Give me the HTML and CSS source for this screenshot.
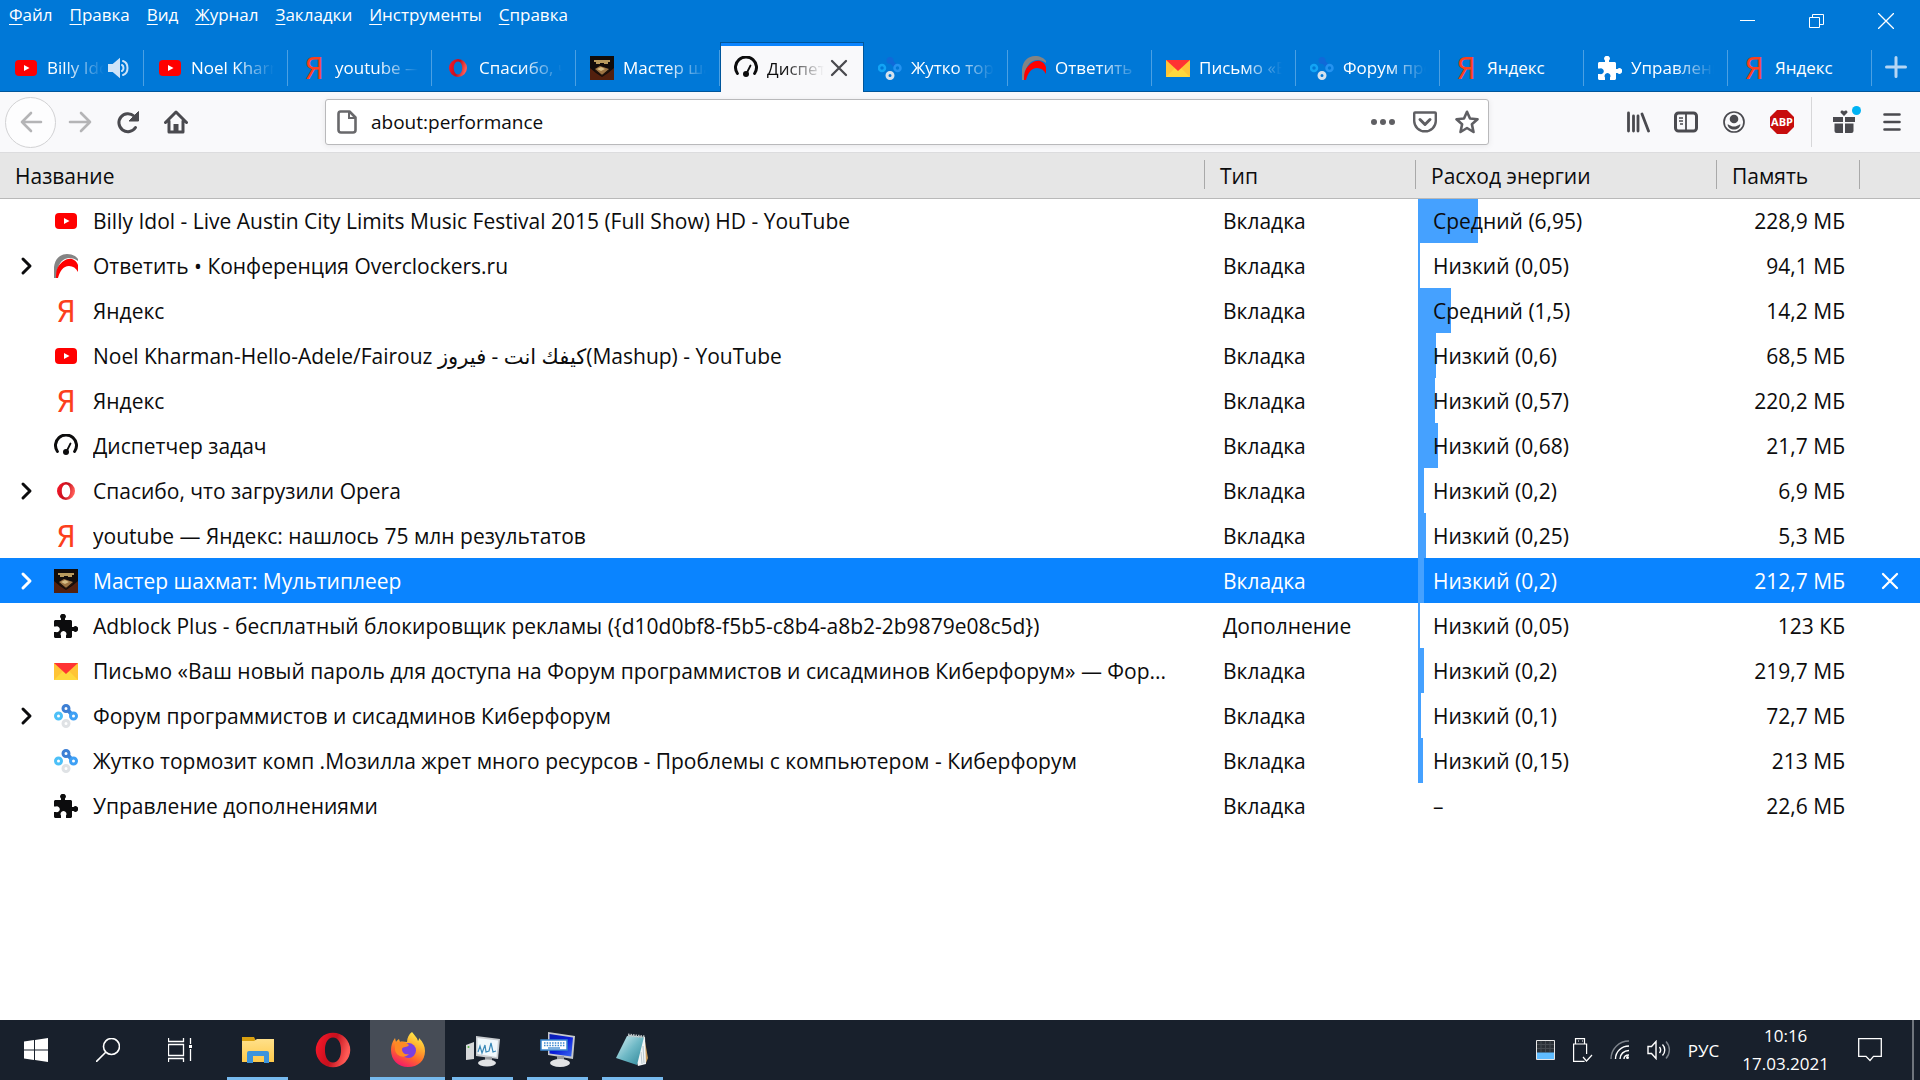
FILE: index.html
```html
<!DOCTYPE html>
<html lang="ru">
<head>
<meta charset="UTF-8">
<meta name="viewport" content="width=device-width, initial-scale=1.0">
<title>Диспетчер задач</title>
<link rel="stylesheet" href="styles.css">
</head>
<body>

<!-- icon sprite -->
<svg class="sprite" width="0" height="0">
    <defs>
        <linearGradient id="gOpera" x1="0" y1="0" x2="1" y2="0.3">
            <stop offset="0" stop-color="#ff1b2d"/>
            <stop offset="0.45" stop-color="#d0101f"/>
            <stop offset="0.6" stop-color="#c4121f"/>
            <stop offset="1" stop-color="#ff5a55"/>
        </linearGradient>
        <linearGradient id="gFox" x1="0.8" y1="0" x2="0.3" y2="1">
            <stop offset="0" stop-color="#fff44f"/>
            <stop offset="0.35" stop-color="#ffb02e"/>
            <stop offset="0.65" stop-color="#ff6a2a"/>
            <stop offset="1" stop-color="#f5156c"/>
        </linearGradient>
        <linearGradient id="gNote" x1="0" y1="0" x2="1" y2="1">
            <stop offset="0" stop-color="#d8f0f4"/>
            <stop offset="0.5" stop-color="#6fb9c6"/>
            <stop offset="1" stop-color="#2e8698"/>
        </linearGradient>
        <linearGradient id="gFolder" x1="0" y1="0" x2="0" y2="1">
            <stop offset="0" stop-color="#ffe08a"/>
            <stop offset="1" stop-color="#ffca4a"/>
        </linearGradient>
        <linearGradient id="gScreen" x1="0" y1="0" x2="1" y2="1">
            <stop offset="0" stop-color="#0a1fb0"/>
            <stop offset="0.5" stop-color="#0a1cd8"/>
            <stop offset="1" stop-color="#3c6cf0"/>
        </linearGradient>
    </defs>
    <symbol id="youtube" viewBox="0 0 24 24">
        <rect x="1" y="4" width="22" height="16" rx="4" fill="#f00"/>
        <path d="M10 9l5.500 3-5.500 3z" fill="#fff"/>
    </symbol>
    <symbol id="overclockers" viewBox="0 0 24 24">
        <path d="M0 24V13C1 5 6 0 13 0c5 0 9 2 11 5v2C20 4 15 3 11 5 6 7 3 13 2 24z" fill="#848484"/>
        <path d="M2 24c0-4 0-8 2-11C8 7 13 4 18 5c3 1 5 3 6 6v7c-2-4-5-6-9-6-6 0-9 5-11 12z" fill="#f00"/>
    </symbol>
    <symbol id="yandex" viewBox="0 0 24 24">
        <text x="12" y="23" text-anchor="middle" class="ya">Я</text>
    </symbol>
    <symbol id="gauge" viewBox="0 0 24 24">
        <path d="M3.400 17.500A10.500 10.500 0 1 1 20.600 17.500" fill="none" stroke="currentColor" stroke-width="3" stroke-linecap="round"/>
        <path d="M16.500 9.500l-4 8" stroke="currentColor" stroke-width="1.800" stroke-linecap="round"/>
        <circle cx="12" cy="18" r="3" fill="currentColor"/>
    </symbol>
    <symbol id="opera" viewBox="0 0 24 24">
        <path fill-rule="evenodd" fill="url(#gOpera)" d="M12 3a9 9 0 1 0 0 18a9 9 0 1 0 0-18zM12 5.500c2.800 0 4.200 3 4.200 6.500s-1.400 6.500-4.200 6.500S7.800 15.500 7.800 12s1.400-6.500 4.200-6.500z"/>
    </symbol>
    <symbol id="chess" viewBox="0 0 24 24">
        <rect width="24" height="24" fill="#120c0a"/>
        <path d="M0 12l6 5 6 4 6-4 6-5v12H0z" fill="#52200e"/>
        <path d="M4 4h16v2h-2v2h-4V7h-4v1H6V6H4z" fill="#b89a5e"/>
        <path d="M5 13l5-3 9 3-7 6z" fill="#9c7443"/>
        <path d="M7 13l4-2 4 2-4 2z" fill="#d6bd85"/>
        <path d="M5 14l7 5 7-5v1l-7 5-7-5z" fill="#2a1509"/>
    </symbol>
    <symbol id="puzzle" viewBox="0 0 24 24">
        <path fill="currentColor" d="M0 7.500C0 6.700.7 6 1.500 6H7V4.500A2.800 2.800 0 1 1 11 4.500V6h5.500c.8 0 1.500.7 1.500 1.500V13h1.500a2.800 2.800 0 1 1 0 4H18v5.500c0 .8-.7 1.500-1.500 1.500H12v-2.500a2.900 2.900 0 1 0-5 0V24H1.500C.7 24 0 23.300 0 22.500V18h2a2.900 2.900 0 1 0 0-5.500H0z"/>
    </symbol>
    <symbol id="mail" viewBox="0 0 24 24">
        <path d="M0 4h24v17H0z" fill="#ffd83d"/>
        <path d="M0 4v17l9-9zM24 4v17l-9-9z" fill="#ffc436"/>
        <path d="M0 4h24L12 15z" fill="#ff3333"/>
    </symbol>
    <symbol id="cyber" viewBox="0 0 24 24">
        <path d="M13 5l6 7" stroke="#3b87dc" stroke-width="4"/>
        <circle cx="12" cy="19.500" r="3" fill="none" stroke="#dfe2e5" stroke-width="3"/>
        <circle cx="4.500" cy="12" r="3" fill="none" stroke="#4cc0f8" stroke-width="3"/>
        <circle cx="19.500" cy="12" r="3" fill="#fff" stroke="#3ea0f5" stroke-width="3"/>
        <circle cx="12" cy="4.500" r="3" fill="#fff" stroke="#3d7fd4" stroke-width="3"/>
    </symbol>
    <symbol id="cyber-tab" viewBox="0 0 24 24">
        <path d="M12 4l6 7" stroke="#1069d8" stroke-width="4"/>
        <circle cx="12" cy="4.500" r="3.500" fill="#1069d8"/>
        <circle cx="4" cy="12" r="3" fill="none" stroke="#12a4f5" stroke-width="2.500"/>
        <circle cx="19.500" cy="12" r="3" fill="none" stroke="#2593f0" stroke-width="2.500"/>
        <circle cx="12" cy="19.500" r="3" fill="none" stroke="#d5e2ee" stroke-width="3"/>
    </symbol>
    <symbol id="chevron" viewBox="0 0 16 20">
        <path d="M3 3l7 7-7 7" fill="none" stroke="currentColor" stroke-width="3" stroke-linecap="round" stroke-linejoin="round"/>
    </symbol>
    <symbol id="cross" viewBox="0 0 24 24">
        <path d="M5 5l14 14M19 5L5 19" stroke="currentColor" stroke-width="2.300" stroke-linecap="round"/>
    </symbol>
</svg>

<header class="titlebar">
    <nav class="menubar">
        <button><u>Ф</u>айл</button>
        <button><u>П</u>равка</button>
        <button><u>В</u>ид</button>
        <button><u>Ж</u>урнал</button>
        <button><u>З</u>акладки</button>
        <button><u>И</u>нструменты</button>
        <button><u>С</u>правка</button>
    </nav>
    <div class="window-controls">
        <button aria-label="Свернуть"><svg width="16" height="16" viewBox="0 0 16 16"><path d="M0 7.500h15" stroke="#fff"/></svg></button>
        <button aria-label="Восстановить"><svg width="16" height="16" viewBox="0 0 16 16"><path d="M.5 4.500h10v10H.5zM3.500 4.500v-3h11v10h-4" fill="none" stroke="#fff"/></svg></button>
        <button aria-label="Закрыть"><svg width="16" height="16" viewBox="0 0 16 16"><path d="M0 0l16 16M16 0L0 16" stroke="#fff" stroke-width="1.300"/></svg></button>
    </div>
</header>

<div class="tabs">
    <div class="tab">
        <button class="tab-main"><svg class="icon"><use href="#youtube"/></svg><span class="fade">Billy Idol - Live Austin</span></button>
        <button class="tab-extra" aria-label="Звук">
            <svg width="24" height="24" viewBox="0 0 24 24" fill="none" stroke="#cfe4f8" stroke-width="2"><path d="M2 9h4l6-5v16l-6-5H2z" fill="#cfe4f8"/><path d="M15 9c2 1 2 5 0 6M16 5c6 2 6 12 0 14" stroke-linecap="round"/></svg>
        </button>
    </div>
    <div class="tab"><button class="tab-main"><svg class="icon"><use href="#youtube"/></svg><span class="fade">Noel Kharman-Hello</span></button></div>
    <div class="tab"><button class="tab-main"><svg class="icon"><use href="#yandex"/></svg><span class="fade">youtube — Яндекс</span></button></div>
    <div class="tab"><button class="tab-main"><svg class="icon"><use href="#opera"/></svg><span class="fade">Спасибо, что загрузили</span></button></div>
    <div class="tab"><button class="tab-main"><svg class="icon"><use href="#chess"/></svg><span class="fade">Мастер шахмат</span></button></div>
    <div class="tab active">
        <button class="tab-main"><svg class="icon"><use href="#gauge"/></svg><span class="fade">Диспетчер задач</span></button>
        <button class="tab-extra" aria-label="Закрыть вкладку"><svg class="icon"><use href="#cross"/></svg></button>
    </div>
    <div class="tab"><button class="tab-main"><svg class="icon"><use href="#cyber-tab"/></svg><span class="fade">Жутко тормозит комп</span></button></div>
    <div class="tab"><button class="tab-main"><svg class="icon"><use href="#overclockers"/></svg><span class="fade">Ответить • Конференция</span></button></div>
    <div class="tab"><button class="tab-main"><svg class="icon"><use href="#mail"/></svg><span class="fade">Письмо «Ваш новый</span></button></div>
    <div class="tab"><button class="tab-main"><svg class="icon"><use href="#cyber-tab"/></svg><span class="fade">Форум программистов</span></button></div>
    <div class="tab"><button class="tab-main"><svg class="icon"><use href="#yandex"/></svg><span>Яндекс</span></button></div>
    <div class="tab"><button class="tab-main"><svg class="icon"><use href="#puzzle"/></svg><span class="fade">Управление дополнениями</span></button></div>
    <div class="tab"><button class="tab-main"><svg class="icon"><use href="#yandex"/></svg><span>Яндекс</span></button></div>
    <button class="new-tab" aria-label="Новая вкладка"><svg class="icon" viewBox="0 0 24 24"><path d="M12 2.500v19M2.500 12h19" stroke="#b5d6f4" stroke-width="3" stroke-linecap="round"/></svg></button>
</div>

<div class="toolbar">
    <button class="back" aria-label="Назад"><svg class="icon" viewBox="0 0 24 24"><path d="M22 12H3M12 3l-9 9 9 9" fill="none" stroke="#b4b4b6" stroke-width="2.600" stroke-linecap="round" stroke-linejoin="round"/></svg></button>
    <button class="tool" aria-label="Вперёд"><svg class="icon" viewBox="0 0 24 24"><path d="M2 12h20M13 3l9 9-9 9" fill="none" stroke="#b4b4b6" stroke-width="2.600" stroke-linecap="round" stroke-linejoin="round"/></svg></button>
    <button class="tool" aria-label="Обновить"><svg class="icon" viewBox="0 0 24 24"><path d="M19.500 17.500A9 9 0 1 1 18 6" fill="none" stroke="#4a4a4f" stroke-width="3" stroke-linecap="round"/><path d="M22.500 1.500v9.500h-9.500z" fill="#4a4a4f" stroke="#4a4a4f" stroke-linejoin="round"/></svg></button>
    <button class="tool" aria-label="Домой"><svg class="icon" viewBox="0 0 24 24"><path d="M1.500 12.500L12 2l10.500 10.500M5 11v11h14V11" fill="none" stroke="#4a4a4f" stroke-width="3" stroke-linecap="round" stroke-linejoin="round"/><path d="M9.500 22v-8h5v8z" fill="#4a4a4f"/></svg></button>
    <div class="spacer"></div>
    <div class="urlbar">
        <svg class="icon" viewBox="0 0 24 24"><path d="M5.500 1.500h9l6 6V20q0 2.500-2.500 2.500H6Q3.500 22.500 3.500 20V4Q3.500 1.500 5.500 1.500z" fill="none" stroke="#68686b" stroke-width="2.600" stroke-linejoin="round"/><path d="M14 2v6h6" fill="none" stroke="#68686b" stroke-width="2"/></svg>
        <input type="text" value="about:performance" aria-label="Адрес">
        <button class="page-action" aria-label="Действия"><svg class="icon" viewBox="0 0 24 24" fill="#5f5f63"><circle cx="3" cy="12" r="3"/><circle cx="12" cy="12" r="3"/><circle cx="21" cy="12" r="3"/></svg></button>
        <button class="page-action" aria-label="Pocket"><svg class="icon" viewBox="0 0 24 24" fill="none" stroke="#5f5f63" stroke-linecap="round" stroke-linejoin="round"><path d="M2 2.500h20q.8 0 .8.8V11A10.800 10.300 0 0 1 1.200 11V3.300q0-.8.8-.8z" stroke-width="2.400"/><path d="M7 9.500l5 5 5-5" stroke-width="3"/></svg></button>
        <button class="page-action" aria-label="Закладка"><svg class="icon" viewBox="0 0 24 24"><path d="M12 1.800l3 6.700 7.500.8-5.600 5 1.600 7.700L12 18l-6.500 4 1.600-7.700-5.600-5 7.500-.8z" fill="none" stroke="#5f5f63" stroke-width="2.600" stroke-linejoin="round"/></svg></button>
    </div>
    <div class="spacer"></div>
    <button class="tool" aria-label="Библиотека"><svg class="icon" viewBox="0 0 24 24"><path d="M2.500 3v18M7.500 6v15M12 6v15M16 4l6.500 17" stroke="#4a4a4f" stroke-width="2.800" stroke-linecap="round"/></svg></button>
    <button class="tool" aria-label="Боковая панель"><svg class="icon" viewBox="0 0 24 24" fill="none" stroke="#4a4a4f"><rect x="1.500" y="3" width="21" height="18" rx="3" stroke-width="3"/><path d="M12 3v18" stroke-width="1.800"/><path d="M5 8h4M5 11h4M6 14h3" stroke-width="1.500"/></svg></button>
    <button class="tool" aria-label="Аккаунт"><svg class="icon" viewBox="0 0 24 24"><circle cx="12" cy="12" r="10" fill="none" stroke="#4a4a4f" stroke-width="1.700"/><circle cx="12" cy="9" r="4.300" fill="#4a4a4f"/><path d="M5.500 14.500c2 0 3 2 6.500 2s4.500-2 6.500-2c-.5 3-3 5-6.500 5s-6-2-6.500-5z" fill="#4a4a4f"/></svg></button>
    <button class="tool" aria-label="Adblock Plus"><svg class="icon" viewBox="0 0 24 24"><path d="M7 0h10l7 7v10l-7 7H7l-7-7V7z" fill="#c70d0d"/><text x="12" y="16" text-anchor="middle" class="abp">ABP</text></svg></button>
    <div class="divider"></div>
    <button class="tool gift" aria-label="Что нового"><svg class="icon" viewBox="0 0 24 24" fill="#4a4a4f"><path d="M1 7h10v5H1zM13 7h10v5H13zM2.500 13.500H11V23H4.500q-2 0-2-2zM13 13.500h8.500V21q0 2-2 2H13z"/><path d="M12 6L8.500 2.500C8.500 0 11 0 12 1.500 13 0 15.500 0 15.500 2.500z"/></svg></button>
    <button class="tool" aria-label="Меню"><svg class="icon" viewBox="0 0 24 24"><path d="M4.500 4.500h15M4.500 12h15M4.500 19.500h15" stroke="#4a4a4f" stroke-width="2.600" stroke-linecap="round"/></svg></button>
</div>

<main>
<table class="tasks">
    <thead>
        <tr>
            <th>Название</th>
            <th class="col-type">Тип</th>
            <th class="col-energy">Расход энергии</th>
            <th class="col-memory">Память</th>
            <th class="col-close"></th>
        </tr>
    </thead>
    <tbody>
        <tr>
            <td><div class="name"><span class="twisty"></span><svg class="icon"><use href="#youtube"/></svg><span>Billy Idol - Live Austin City Limits Music Festival 2015 (Full Show) HD - YouTube</span></div></td>
            <td class="type">Вкладка</td><td class="energy" style="background-size: 60px 100%">Средний (6,95)</td><td class="memory">228,9 МБ</td><td></td>
        </tr>
        <tr>
            <td><div class="name"><button class="twisty" aria-label="Развернуть"><svg><use href="#chevron"/></svg></button><svg class="icon"><use href="#overclockers"/></svg><span>Ответить • Конференция Overclockers.ru</span></div></td>
            <td class="type">Вкладка</td><td class="energy" style="background-size: 2px 100%">Низкий (0,05)</td><td class="memory">94,1 МБ</td><td></td>
        </tr>
        <tr>
            <td><div class="name"><span class="twisty"></span><svg class="icon"><use href="#yandex"/></svg><span>Яндекс</span></div></td>
            <td class="type">Вкладка</td><td class="energy" style="background-size: 33px 100%">Средний (1,5)</td><td class="memory">14,2 МБ</td><td></td>
        </tr>
        <tr>
            <td><div class="name"><span class="twisty"></span><svg class="icon"><use href="#youtube"/></svg><span>Noel Kharman-Hello-Adele/Fairouz كيفك انت - فيروز(Mashup) - YouTube</span></div></td>
            <td class="type">Вкладка</td><td class="energy" style="background-size: 18px 100%">Низкий (0,6)</td><td class="memory">68,5 МБ</td><td></td>
        </tr>
        <tr>
            <td><div class="name"><span class="twisty"></span><svg class="icon"><use href="#yandex"/></svg><span>Яндекс</span></div></td>
            <td class="type">Вкладка</td><td class="energy" style="background-size: 17px 100%">Низкий (0,57)</td><td class="memory">220,2 МБ</td><td></td>
        </tr>
        <tr>
            <td><div class="name"><span class="twisty"></span><svg class="icon"><use href="#gauge"/></svg><span>Диспетчер задач</span></div></td>
            <td class="type">Вкладка</td><td class="energy" style="background-size: 20px 100%">Низкий (0,68)</td><td class="memory">21,7 МБ</td><td></td>
        </tr>
        <tr>
            <td><div class="name"><button class="twisty" aria-label="Развернуть"><svg><use href="#chevron"/></svg></button><svg class="icon"><use href="#opera"/></svg><span>Спасибо, что загрузили Opera</span></div></td>
            <td class="type">Вкладка</td><td class="energy" style="background-size: 6px 100%">Низкий (0,2)</td><td class="memory">6,9 МБ</td><td></td>
        </tr>
        <tr>
            <td><div class="name"><span class="twisty"></span><svg class="icon"><use href="#yandex"/></svg><span>youtube — Яндекс: нашлось 75 млн результатов</span></div></td>
            <td class="type">Вкладка</td><td class="energy" style="background-size: 8px 100%">Низкий (0,25)</td><td class="memory">5,3 МБ</td><td></td>
        </tr>
        <tr class="selected">
            <td><div class="name"><button class="twisty" aria-label="Развернуть"><svg><use href="#chevron"/></svg></button><svg class="icon"><use href="#chess"/></svg><span>Мастер шахмат: Мультиплеер</span></div></td>
            <td class="type">Вкладка</td><td class="energy" style="background-size: 6px 100%">Низкий (0,2)</td><td class="memory">212,7 МБ</td>
            <td><button class="close" aria-label="Закрыть вкладку"><svg class="icon"><use href="#cross"/></svg></button></td>
        </tr>
        <tr>
            <td><div class="name"><span class="twisty"></span><svg class="icon"><use href="#puzzle"/></svg><span>Adblock Plus - бесплатный блокировщик рекламы ({d10d0bf8-f5b5-c8b4-a8b2-2b9879e08c5d})</span></div></td>
            <td class="type">Дополнение</td><td class="energy" style="background-size: 2px 100%">Низкий (0,05)</td><td class="memory">123 КБ</td><td></td>
        </tr>
        <tr>
            <td><div class="name"><span class="twisty"></span><svg class="icon"><use href="#mail"/></svg><span>Письмо «Ваш новый пароль для доступа на Форум программистов и сисадминов Киберфорум» — Фор...</span></div></td>
            <td class="type">Вкладка</td><td class="energy" style="background-size: 6px 100%">Низкий (0,2)</td><td class="memory">219,7 МБ</td><td></td>
        </tr>
        <tr>
            <td><div class="name"><button class="twisty" aria-label="Развернуть"><svg><use href="#chevron"/></svg></button><svg class="icon"><use href="#cyber"/></svg><span>Форум программистов и сисадминов Киберфорум</span></div></td>
            <td class="type">Вкладка</td><td class="energy" style="background-size: 3px 100%">Низкий (0,1)</td><td class="memory">72,7 МБ</td><td></td>
        </tr>
        <tr>
            <td><div class="name"><span class="twisty"></span><svg class="icon"><use href="#cyber"/></svg><span>Жутко тормозит комп .Мозилла жрет много ресурсов - Проблемы с компьютером - Киберфорум</span></div></td>
            <td class="type">Вкладка</td><td class="energy" style="background-size: 5px 100%">Низкий (0,15)</td><td class="memory">213 МБ</td><td></td>
        </tr>
        <tr>
            <td><div class="name"><span class="twisty"></span><svg class="icon"><use href="#puzzle"/></svg><span>Управление дополнениями</span></div></td>
            <td class="type">Вкладка</td><td class="energy" style="background-size: 0 100%">–</td><td class="memory">22,6 МБ</td><td></td>
        </tr>
    </tbody>
</table>
</main>

<footer class="taskbar">
    <button class="sys" aria-label="Пуск"><svg class="icon" viewBox="0 0 24 24" fill="#fff"><path d="M0 3.500l10-1.400v9.400H0zM11 2l13-2v11.500H11zM0 12.500h10v9.400L0 20.500zM11 12.500h13V24l-13-2z"/></svg></button>
    <button class="sys" aria-label="Поиск"><svg class="icon" viewBox="0 0 24 24" fill="none" stroke="#fff" stroke-width="1.600"><circle cx="15.500" cy="8.500" r="8"/><path d="M9.700 14.300L0 24"/></svg></button>
    <button class="sys" aria-label="Представление задач"><svg class="icon" viewBox="0 0 24 24" fill="none" stroke="#fff" stroke-width="1.300"><path d="M.5 0v3.500h15V0M.5 6.500h15v11H.5zM.5 24v-3.500h15V24M22.500 0v6M22.500 11v12"/><path d="M21 7h3v3h-3z" fill="#fff" stroke="none"/></svg></button>
    <div class="apps">
        <button class="app open" aria-label="Проводник"><svg width="36" height="36" viewBox="0 0 36 36"><path d="M2 5h12l2 4H2z" fill="#d9a010"/><path d="M2 9h12l3-2h17v23H2z" fill="url(#gFolder)"/><path d="M7 31V21q0-2 2-2h18q2 0 2 2v10h-5v-7H13v7z" fill="#3c94dc"/></svg></button>
        <button class="app" aria-label="Opera"><svg width="46" height="46"><use href="#opera"/></svg></button>
        <button class="app open current" aria-label="Firefox"><svg width="36" height="36" viewBox="0 0 36 36"><path d="M22 0c2 3 5 5 6 9 1-1 1-2 1-3 4 4 6 8 6 13 0 10-7 16-17 16S1 28 1 18c0-4 1-8 4-12l1 4c1-2 2-2 3-3l1 3c3-1 5 0 7 0 0-4 2-8 5-10z" fill="url(#gFox)"/><circle cx="18.500" cy="18.500" r="7.500" fill="#7b3fe0"/><path d="M5 11c4-2 10-2 14 2-2 3-6 1-7 4 0 4 3 6 7 5-3 4-12 4-14-4z" fill="#ff8a24"/></svg></button>
        <button class="app open" aria-label="Монитор ресурсов"><svg width="36" height="36" viewBox="0 0 36 36"><path d="M1 13l8-3v17l-8 1z" fill="#d6d8da"/><circle cx="3.500" cy="15" r="1" fill="#4fae3c"/><path d="M11 4l24 3-2 20-22-3z" fill="#c9ccd0"/><path d="M12.500 6l20.500 2.500-1.500 16.500-19-3z" fill="#f1f8fc"/><path d="M13 20l2-6 2 7 3-8 1 7 3-1 2-8 2 9 3-1" fill="none" stroke="#3b89b8" stroke-width="1.200"/><path d="M20 25h7v4h-7z" fill="#9a9da1"/><ellipse cx="22" cy="31" rx="9" ry="3.500" fill="#e2e4e6"/></svg></button>
        <button class="app open" aria-label="Экранная клавиатура"><svg width="36" height="36" viewBox="0 0 36 36"><path d="M8 0l27 4-2 23-25-4z" fill="#c6c9cd"/><path d="M9.500 2l23.500 3.500-1.700 19L9.500 21.500z" fill="url(#gScreen)"/><path d="M1 8h26v10H1z" fill="#fff" stroke="#3a86cf" stroke-width="1.500"/><path d="M4 11h21M4 13.500h21" stroke="#3a86cf" stroke-width="1.500" stroke-dasharray="1.500 1.200"/><path d="M8 16h12" stroke="#3a86cf" stroke-width="1.300"/><path d="M17 24h7v5h-7z" fill="#9a9da1"/><ellipse cx="20" cy="31" rx="10" ry="4" fill="#e2e4e6"/></svg></button>
        <button class="app open" aria-label="Блокнот"><svg width="36" height="36" viewBox="0 0 36 36"><path d="M29 4l4 22-2 5-6 2z" fill="#c79a5a"/><path d="M14 3l16 2 1 27-8 2z" fill="#f2f5f6"/><path d="M12 4l17 1-7 28-21-7z" fill="url(#gNote)"/><path d="M13 3l17 2" stroke="#b9c2c4" stroke-width="3" stroke-dasharray="1.500 1"/><path d="M28 14l1 17M26 20l1 12" stroke="#b9c8cc"/></svg></button>
    </div>
    <div class="tray">
        <button aria-label="Диспетчер задач"><svg width="20" height="20" viewBox="0 0 20 20"><path d="M.5.500h18v19H.5z" fill="#2b3036" stroke="#e6e6e6"/><path d="M1 4.500h17M1 8.500h17M5 1v11M9.500 1v11M14 1v11" stroke="#454a50"/><path d="M1 12.500h17V19H1z" fill="#5fbcff"/></svg></button>
        <button aria-label="USB"><svg width="20" height="24" viewBox="0 0 20 24" fill="none" stroke="#fff" stroke-width="1.200"><path d="M2.500.6h9V6h-9zM13.600 16V6H.6v17.400h11"/><path d="M5 3h1M9 3h1M10 19l3.500 4L19 17"/></svg></button>
        <button aria-label="Сеть"><svg width="20" height="20" viewBox="0 0 20 20" fill="none" stroke="#fff" stroke-width="1.400"><path d="M1 19C1 9 9 1 19 1" stroke="#7d838b"/><path d="M5.500 19C5.500 11.500 11.500 6 19 6M10 19c0-5 4-8.500 9-8.500M14 19c0-2.500 2-4 5-4"/><circle cx="17.500" cy="17.500" r="1.500" fill="#fff" stroke="none"/></svg></button>
        <button aria-label="Громкость"><svg width="24" height="20" viewBox="0 0 24 20" fill="none" stroke="#fff" stroke-width="1.400"><path d="M1 6.500h3.500L9 1.500v17l-4.500-5H1z"/><path d="M12.500 7c1.500 2 1.500 4 0 6M15.500 4.500c3 3 3 8 0 11"/><path d="M19 1.500c4.500 5 4.500 12 0 17" stroke="#7d838b"/></svg></button>
        <button class="lang">РУС</button>
        <button class="clock"><span>10:16</span><span>17.03.2021</span></button>
        <button class="notify" aria-label="Уведомления"><svg width="24" height="24" viewBox="0 0 24 24"><path d="M.7.700h22.600v17.600H15.500L12 22.500l-4-4.200H.7z" fill="none" stroke="#fff" stroke-width="1.300"/></svg></button>
    </div>
    <button class="show-desktop" aria-label="Показать рабочий стол"></button>
</footer>

</body>
</html>
```

FILE: styles.css
```css
* {
    box-sizing: border-box;
}
body {
    margin: 0;
    min-height: 100vh;
    display: flex;
    flex-direction: column;
    font-family: "Open Sans", "DejaVu Sans", sans-serif;
    font-size: 21px;
    color: #0c0c0d;
    background: #fff;
}
button {
    padding: 0;
    border: none;
    background: none;
    color: inherit;
    font: inherit;
    display: flex;
    align-items: center;
    justify-content: center;
}
svg {
    display: block;
    flex: none;
}
.sprite {
    position: absolute;
}
.icon {
    width: 24px;
    height: 24px;
}
.ya {
    font: 31px "Liberation Sans Narrow", "DejaVu Sans Condensed", sans-serif;
    fill: #fc3f1d;
}
.abp {
    font: bold 11px "Open Sans", sans-serif;
    fill: #fff;
}

/* title bar */
.titlebar {
    display: flex;
    justify-content: space-between;
    align-items: flex-start;
    height: 42px;
    background: #0078d7;
    color: #fff;
}
.menubar {
    display: flex;
    gap: 17px;
    padding-left: 9px;
    font-size: 17px;
    line-height: 30px;
}
.menubar u {
    text-underline-offset: 3px;
}
.window-controls {
    display: flex;
}
.window-controls button {
    width: 69px;
    height: 41px;
}

/* tabs */
.tabs {
    display: flex;
    height: 50px;
    background: #0078d7;
    box-shadow: inset 0 -1px #00569b;
    color: #fff;
    font-size: 17px;
}
.tab {
    flex: 1;
    min-width: 0;
    display: flex;
    padding: 0 14px;
    background: linear-gradient(#4ba0e3, #4ba0e3) right 8px / 1px 36px no-repeat;
}
.tab-main {
    flex: 1;
    min-width: 0;
    gap: 9px;
    justify-content: flex-start;
    padding-top: 1px;
}
.tab-main span {
    flex: 1;
    min-width: 0;
    overflow: hidden;
    white-space: nowrap;
    text-align: left;
}
.fade {
    mask-image: linear-gradient(to left, transparent, #000 40px);
}
.tab-extra {
    width: 30px;
    margin-right: -4px;
    padding-top: 1px;
}
.tab.active {
    background: #f9f9fb;
    color: #0c0c0d;
    border: 1px solid #00569b;
    border-bottom: none;
    box-shadow: inset 0 3px #0a84ff;
    padding: 0 13px;
}
.active .tab-extra {
    color: #4a4a4f;
}
.new-tab {
    width: 48px;
}

/* navigation */
.toolbar {
    display: flex;
    align-items: center;
    height: 61px;
    padding: 0 4px 0 5px;
    background: #f9f9fb;
    border-bottom: 1px solid #dcdcde;
}
.back {
    width: 51px;
    height: 51px;
    border: 1px solid #d2d2d4;
    border-radius: 50%;
    background: #fdfdfe;
}
.tool {
    width: 48px;
    height: 48px;
}
.spacer {
    width: 125px;
}
.urlbar {
    flex: 1;
    display: flex;
    align-items: center;
    height: 46px;
    padding-left: 9px;
    border: 1px solid #b9b9bb;
    border-radius: 3px;
    background: #fff;
    box-shadow: 0 1px 6px rgba(0, 0, 0, 0.08);
}
.urlbar input {
    flex: 1;
    min-width: 0;
    margin-left: 12px;
    padding: 0;
    border: none;
    outline: none;
    background: none;
    font: inherit;
    font-size: 19px;
    color: #0c0c0d;
}
.page-action {
    width: 42px;
    height: 42px;
}
.divider {
    width: 1px;
    height: 50px;
    margin: 0 8px 0 5px;
    background: #d7d7d9;
}
.gift {
    position: relative;
}
.gift::after {
    content: "";
    position: absolute;
    top: 8px;
    right: 7px;
    width: 9px;
    height: 9px;
    border-radius: 50%;
    background: #00b3f4;
}

/* task table */
main {
    flex: 1;
}
.tasks {
    width: 100%;
    table-layout: fixed;
    border-spacing: 0;
}
.tasks th {
    height: 45px;
    padding: 0 15px;
    text-align: left;
    font-weight: normal;
    background: #e6e6e6 linear-gradient(#a9a9a9, #a9a9a9) right 7px / 1px 29px no-repeat;
}
.tasks th:last-child {
    background-image: none;
}
.tasks thead {
    position: relative;
    box-shadow: 0 1px #b9b9b9;
}
.col-type {
    width: 211px;
}
.col-energy {
    width: 301px;
}
.col-memory {
    width: 143px;
}
.col-close {
    width: 60px;
}
.tasks td {
    height: 45px;
    padding: 0;
    white-space: nowrap;
}
.name {
    display: flex;
    align-items: center;
    padding: 0 20px;
}
.name span:last-child {
    margin-left: 15px;
    overflow: hidden;
    text-overflow: ellipsis;
}
.twisty {
    width: 34px;
    height: 20px;
    flex: none;
    justify-content: flex-start;
}
.twisty svg {
    width: 16px;
    height: 20px;
}
.tasks .type {
    padding-left: 18px;
}
.tasks .energy {
    padding-left: 15px;
    border-left: 2px solid transparent;
    background: linear-gradient(#45a1ff, #45a1ff) no-repeat;
}
.tasks .memory {
    padding-right: 15px;
    text-align: right;
}
.close {
    width: 100%;
}
.selected {
    background: #0a84ff;
    color: #fff;
}

/* taskbar */
.taskbar {
    display: flex;
    height: 60px;
    background: #18202c;
    color: #fff;
    font-size: 17px;
}
.sys {
    width: 72px;
}
.apps {
    display: flex;
    margin-left: 4px;
}
.app {
    width: 75px;
}
.open {
    background: linear-gradient(#76b9ed, #76b9ed) center bottom / 61px 3px no-repeat;
}
.current {
    background-color: #464c56;
    background-size: 100% 3px;
}
.tray {
    display: flex;
    align-items: center;
    gap: 17px;
    margin-left: auto;
}
.clock {
    flex-direction: column;
    line-height: 28px;
    margin-left: 6px;
}
.notify {
    margin: 0 30px 0 12px;
}
.show-desktop {
    width: 8px;
    border-left: 2px solid #6f757d;
}
```
